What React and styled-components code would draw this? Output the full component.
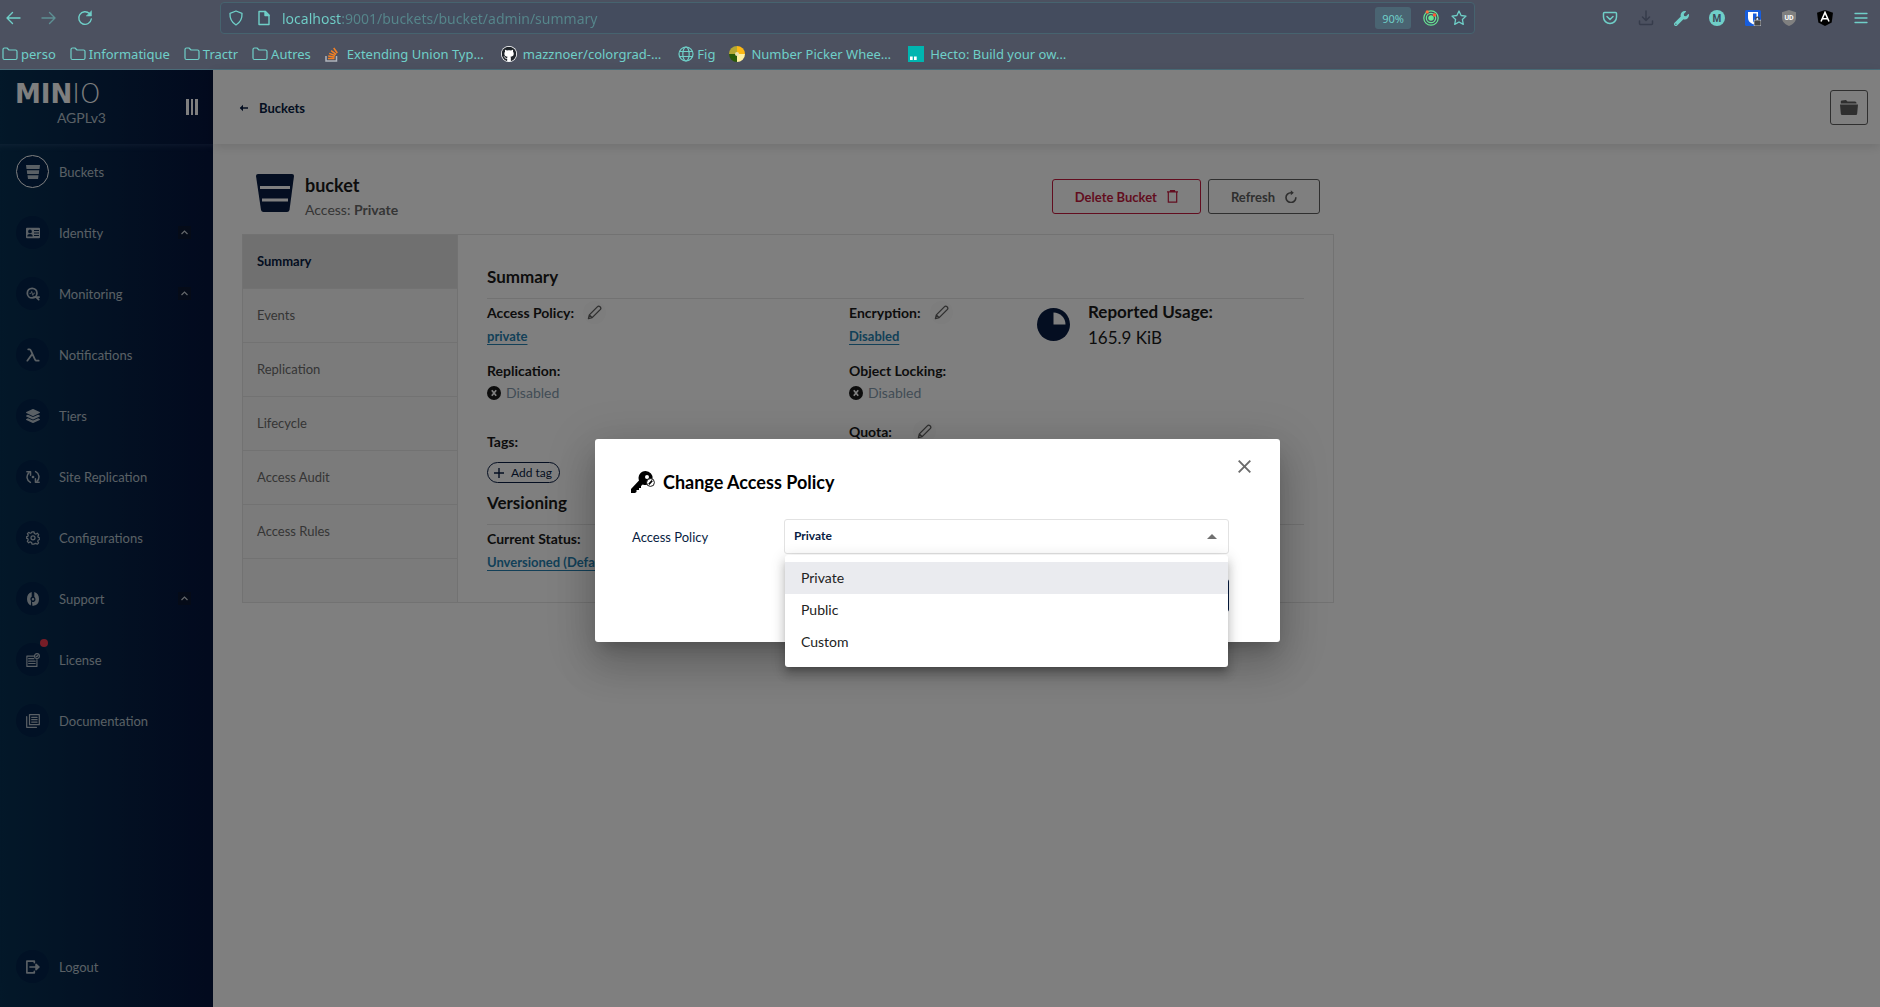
import React from 'react';
import styled, { createGlobalStyle } from 'styled-components';
import { FaGithub, FaWrench, FaLayerGroup } from 'react-icons/fa';

const teal = '#6fcfc8';
const navy = '#081c42';

const GlobalStyle = createGlobalStyle`
  *, *::before, *::after { box-sizing: border-box; }
  body { margin: 0; font-family: Lato, "Open Sans", sans-serif; }
  button, input, select { font: inherit; }
  button { padding: 0; background: none; border: 0; color: inherit; cursor: pointer; }
  svg { display: block; flex: none; }
  h1, h2, h3, p, ul, dl, dd, dt { margin: 0; padding: 0; }
  ul { list-style: none; }
`;

const Window = styled.div`
  display: flex;
  flex-direction: column;
  min-height: 100vh;
`;

/* ---------- browser chrome ---------- */

const Chrome = styled.header`
  background: #4c5160;
  border-bottom: 1px solid #4a6b78;
  color: ${teal};
  font-family: "Noto Sans", sans-serif;
`;

const Toolbar = styled.div`
  display: flex;
  align-items: center;
  height: 36px;
  padding-right: 11px;
`;

const NavButtons = styled.div`
  display: flex;
  gap: 20px;
  width: 220px;
  padding-left: 5px;
`;

const ToolButton = styled.button`
  opacity: ${(p) => (p.$dim ? 0.5 : 1)};
  color: ${(p) => p.$color || teal};
`;

const UrlBar = styled.div`
  flex: 1;
  display: flex;
  align-items: center;
  height: 32px;
  padding: 0 7px;
  background: #444c5e;
  border: 1px solid #46636f;
  border-radius: 4px;
`;

const UrlIcons = styled.div`
  display: flex;
  gap: 12px;
`;

const UrlInput = styled.input`
  flex: 1;
  min-width: 0;
  height: 28px;
  margin-left: 10px;
  padding: 0;
  border: 0;
  outline: 0;
  font-size: 14px;
  color: transparent;
  background: linear-gradient(90deg, ${teal} 60px, #55868b 60px);
  background-clip: text;
  -webkit-background-clip: text;
`;

const UrlTools = styled.div`
  display: flex;
  align-items: center;
  gap: 12px;
`;

const ZoomBadge = styled.button`
  width: 36px;
  height: 22px;
  background: #4a6472;
  border-radius: 3px;
  font-size: 11px;
`;

const Extensions = styled.div`
  display: flex;
  justify-content: flex-end;
  gap: 20px;
  width: 394px;
`;

const Bookmarks = styled.nav`
  display: flex;
  align-items: center;
  gap: 14px;
  height: 33px;
  padding: 2px 0 0 2px;
`;

const Bookmark = styled.a`
  display: flex;
  align-items: center;
  gap: ${(p) => (p.$site ? 6 : 3)}px;
  padding-right: ${(p) => (p.$site ? 3 : 0)}px;
  color: inherit;
  font-size: 13px;
  line-height: 20px;
  text-decoration: none;
  white-space: nowrap;
`;

/* ---------- console shell ---------- */

const Console = styled.div`
  position: relative;
  flex: 1;
  display: grid;
  grid-template-columns: 213px 1fr;
`;

const Sidebar = styled.aside`
  display: flex;
  flex-direction: column;
  padding-bottom: 24px;
  background: linear-gradient(90deg, #073052 0%, #05143c 100%);
  color: #b4c0ca;
`;

const SideHeader = styled.div`
  display: flex;
  justify-content: space-between;
  height: 74px;
  padding: 10px 15px 0 15px;
`;

const Brand = styled.div`
  display: flex;
  flex-direction: column;
  width: 91px;
`;

const Logo = styled.div`
  color: #fff;
  font-family: "DejaVu Sans", sans-serif;
  font-size: 26px;
  line-height: 28px;
  font-weight: 200;
  b { font-weight: 700; }
`;

const License = styled.div`
  align-self: flex-end;
  font-size: 14px;
  line-height: 20px;
`;

const Collapse = styled.button`
  height: 54px;
`;

const SideNav = styled.nav`
  flex: 1;
  display: flex;
  flex-direction: column;
  gap: 28px;
  padding: 11px 22px 0 16px;
  box-shadow: inset 0 6px 6px -5px rgba(120, 150, 190, 0.25);
`;

const SideItem = styled.a`
  display: flex;
  align-items: center;
  gap: 10px;
  height: 33px;
  margin-top: ${(p) => (p.$last ? 'auto' : 0)};
  color: inherit;
  font-size: 13px;
  text-decoration: none;
`;

const SideLabel = styled.span`
  flex: 1;
`;

const Round = styled.span`
  position: relative;
  display: grid;
  place-items: center;
  width: 33px;
  height: 33px;
  border: 1px solid ${(p) => (p.$active ? '#fff' : 'transparent')};
  border-radius: 50%;
  background: #03224a;
`;

const Alert = styled.i`
  position: absolute;
  top: -5px;
  right: 0;
  width: 8px;
  height: 8px;
  border-radius: 50%;
  background: #ee3a4e;
`;

const Caret = styled.span`
  display: grid;
  place-items: center;
  width: 13px;
  height: 13px;
  background: #0a1730;
`;

const Main = styled.main`
  background: #fff;
`;

const PageHeader = styled.div`
  display: flex;
  align-items: center;
  justify-content: space-between;
  height: 74px;
  padding: 1px 12px 0 26px;
  box-shadow: 0 3px 10px rgba(0, 0, 0, 0.12);
`;

const Crumb = styled.a`
  display: flex;
  align-items: center;
  gap: 11px;
  color: ${navy};
  font-size: 13px;
  font-weight: 700;
  text-decoration: none;
`;

const OutlineButton = styled.button`
  display: flex;
  align-items: center;
  justify-content: center;
  gap: 10px;
  height: 35px;
  padding: 0 ${(p) => (p.$icon ? 9 : 22)}px;
  border: 1px solid ${(p) => p.$color || '#5e5e5e'};
  border-radius: 3px;
  color: ${(p) => p.$color || '#5e5e5e'};
  font-size: 13px;
  font-weight: 700;
`;

const Page = styled.div`
  max-width: 1121px;
  padding-left: 29px;
`;

const TitleRow = styled.div`
  display: flex;
  align-items: center;
  gap: 11px;
  height: 90px;
  padding: 15px 14px 0;
`;

const BucketMark = styled.svg`
  margin-bottom: 7px;
`;

const TitleText = styled.div`
  flex: 1;
`;

const Title = styled.h1`
  font-size: 18px;
  line-height: 26px;
  color: #1a1a1a;
`;

const Access = styled.p`
  font-size: 14px;
  line-height: 24px;
  color: #6b6b6b;
`;

const Actions = styled.div`
  display: flex;
  gap: 7px;
`;

const Panel = styled.div`
  display: grid;
  grid-template-columns: 215px 1fr;
  border: 1px solid #e5e5e5;
`;

const Tabs = styled.nav`
  background: #f7f7f7;
  border-right: 1px solid #e5e5e5;
`;

const Tab = styled.a`
  display: flex;
  align-items: center;
  height: 54px;
  padding: 0 0 2px 14px;
  border-bottom: 1px solid #e5e5e5;
  background: ${(p) => (p.$active ? '#e0e0e0' : 'transparent')};
  color: ${(p) => (p.$active ? navy : '#6b6b6b')};
  font-size: 13px;
  font-weight: ${(p) => (p.$active ? 700 : 400)};
  text-decoration: none;
`;

const Content = styled.section`
  padding: 22px 29px 30px;
  color: #1a1a1a;
`;

const SectionTitle = styled.h2`
  padding-bottom: 2px;
  border-bottom: 1px solid #e5e5e5;
  font-size: 17px;
  line-height: 39px;
`;

const Columns = styled.div`
  display: grid;
  grid-template-columns: 362fr 188fr 267fr;
`;

const Stack = styled.div`
  display: flex;
  flex-direction: column;
  gap: 11px;
`;

const Field = styled.div`
  margin-top: ${(p) => p.$space || 0}px;
`;

const FieldLabel = styled.h3`
  display: flex;
  align-items: center;
  gap: ${(p) => (p.$wide ? 21 : 9)}px;
  height: 27px;
  font-size: 14px;
`;

const EditButton = styled.button`
  display: grid;
  place-items: center;
  width: 23px;
  height: 23px;
  border-radius: 50%;
  background: #fafafa;
  color: #5e5e5e;
`;

const ValueLink = styled.a`
  display: block;
  color: #2781b0;
  font-size: 13px;
  font-weight: 700;
  line-height: 20px;
  text-decoration: underline;
  text-underline-offset: 3px;
`;

const Status = styled.p`
  display: flex;
  align-items: center;
  gap: 5px;
  color: #8399ab;
  font-size: 14px;
  line-height: 18px;
`;

const TagButton = styled.button`
  display: flex;
  align-items: center;
  gap: 7px;
  height: 21px;
  margin-top: 7px;
  padding: 0 7px 0 6px;
  border: 1px solid ${navy};
  border-radius: 11px;
  color: ${navy};
  font-size: 12px;
`;

const Usage = styled.div`
  display: flex;
  gap: 18px;
  font-size: 17px;
  line-height: 26px;
`;

const UsageMark = styled.svg`
  margin-top: 9px;
`;

/* ---------- dialog ---------- */

const Backdrop = styled.div`
  position: absolute;
  inset: 0;
  display: grid;
  place-items: center;
  padding: 4px 5px 0 0;
  background: rgba(0, 0, 0, 0.5);
`;

const Dialog = styled.div`
  width: 100%;
  max-width: 685px;
  padding-bottom: 30px;
  background: #fff;
  border-radius: 3px;
  box-shadow: 0 11px 15px -7px rgba(0, 0, 0, 0.2), 0 24px 38px 3px rgba(0, 0, 0, 0.14), 0 9px 46px 8px rgba(0, 0, 0, 0.12);
`;

const DialogHeader = styled.div`
  display: flex;
  align-items: flex-start;
  justify-content: space-between;
  padding: 11px 20px 0 36px;
`;

const DialogTitle = styled.h2`
  display: flex;
  align-items: center;
  gap: 8px;
  padding-top: 20px;
  font-size: 18px;
  line-height: 24px;
`;

const Close = styled.button`
  display: grid;
  place-items: center;
  width: 32px;
  height: 32px;
  color: #6b6b6b;
`;

const FormRow = styled.div`
  display: grid;
  grid-template-columns: 152px 1fr;
  align-items: center;
  padding: 25px 51px 0 37px;
`;

const Label = styled.label`
  color: ${navy};
  font-size: 13px;
`;

const SelectBox = styled.div`
  position: relative;
`;

const Select = styled.select`
  display: block;
  width: 100%;
  height: 35px;
  padding: 0 9px 2px;
  border: 1px solid #e2e2e2;
  border-radius: 3px;
  background: #fff;
  color: ${navy};
  font-size: 12px;
  font-weight: 700;
  appearance: none;
`;

const Arrow = styled.i`
  position: absolute;
  top: 10px;
  right: 12px;
  border: 5px solid transparent;
  border-bottom-color: #707070;
`;

const Menu = styled.ul`
  position: absolute;
  top: 36px;
  left: 1px;
  right: 1px;
  z-index: 1;
  padding: 7px 0 9px;
  background: #fff;
  border-radius: 3px;
  box-shadow: 0 5px 5px -3px rgba(0, 0, 0, 0.2), 0 8px 10px 1px rgba(0, 0, 0, 0.14), 0 3px 14px 2px rgba(0, 0, 0, 0.12);
`;

const Option = styled.li`
  padding: 0 16px;
  background: ${(p) => (p.$active ? '#eaebef' : 'transparent')};
  color: #222;
  font-size: 14px;
  line-height: 32px;
`;

const DialogActions = styled.div`
  display: flex;
  justify-content: flex-end;
  padding: 25px 51px 0 36px;
`;

const PrimaryButton = styled.button`
  width: 64px;
  height: 33px;
  border-radius: 3px;
  background: ${navy};
`;

/* ---------- icons ---------- */

const Line = ({ children, size = 16, w = 1.4 }) => (
  <svg width={size} height={size} viewBox="0 0 16 16" fill="none" stroke="currentColor" strokeWidth={w} strokeLinecap="round" strokeLinejoin="round" aria-hidden="true">
    {children}
  </svg>
);
const Solid = ({ children, size = 14 }) => (
  <svg width={size} height={size} viewBox="0 0 14 14" fill="currentColor" aria-hidden="true">{children}</svg>
);

const BackIcon = () => <Line><path d="M15 8H2M7.500 2.500L2 8l5.500 5.500" /></Line>;
const ForwardIcon = () => <Line><path d="M1 8h13M8.500 2.500L14 8l-5.500 5.500" /></Line>;
const ReloadIcon = () => <Line><path d="M14.300 9A6.300 6.300 0 1 1 12.500 3.600" /><path d="M14.500 1v5h-5z" fill="currentColor" strokeWidth="0.500" /></Line>;
const ShieldIcon = () => <Line w={1.3}><path d="M8 1l6 2.300c.3 5-1.500 9-6 11.700-4.500-2.700-6.300-6.700-6-11.700z" /></Line>;
const PageIcon = () => <Line><path d="M3 1.500h6.500L13 5v9.500H3z" /><path d="M9 1.500V5.500h4" fill="currentColor" /></Line>;
const FolderLine = () => <Line w={1.2}><path d="M1 3.500q0-1.500 1.500-1.500H5l2 2h6.500q1.500 0 1.500 1.500v6.500q0 1.500-1.500 1.500h-11Q1 13.500 1 12z" /></Line>;
const GlobeIcon = () => <Line w={1.2}><circle cx="8" cy="8" r="7" /><ellipse cx="8" cy="8" rx="3.200" ry="7" /><path d="M1.500 5.500h13M1.500 10.500h13" /></Line>;
const StarIcon = () => <Line w={1.3}><path d="M8 1l2.100 4.500 4.900.6-3.600 3.400.9 4.900L8 12l-4.300 2.400.9-4.900L1 6.100l4.900-.6z" /></Line>;
const OrbitIcon = () => (
  <svg width="16" height="16" viewBox="0 0 16 16" fill="none" stroke="#68e594" strokeWidth="1.200" aria-hidden="true">
    <circle cx="8" cy="8" r="7.200" /><circle cx="8" cy="8" r="4.700" /><circle cx="8" cy="8" r="2.200" fill="#68e594" />
    <circle cx="4.200" cy="1.900" r="1.600" fill="#ff7139" stroke="none" /><circle cx="11.500" cy="5" r="1.700" fill="#ff5a36" stroke="none" />
  </svg>
);
const PocketIcon = () => <Line w={1.5}><path d="M2.500 2.500h11q1 0 1 1V7a6.500 6.500 0 0 1-13 0V3.500q0-1 1-1zM5 6.500l3 3 3-3" /></Line>;
const DownloadIcon = () => <Line w={1.5}><path d="M8 1v9M4.500 7L8 10.500 11.500 7M1.500 11v2.500q0 1 1 1h11q1 0 1-1V11" /></Line>;
const MIcon = () => (
  <svg width="16" height="16" viewBox="0 0 16 16" aria-hidden="true">
    <circle cx="8" cy="8" r="8" fill={teal} />
    <text x="8" y="11.500" textAnchor="middle" fontFamily="Roboto" fontWeight="700" fontSize="10" fill="#3c4a58">M</text>
  </svg>
);
const VaultIcon = () => (
  <svg width="16" height="16" viewBox="0 0 16 16" aria-hidden="true">
    <rect width="16" height="16" rx="1.500" fill="#175ddc" />
    <path d="M3 2h10v6c0 3-2 4.800-5 6.200C5 12.800 3 11 3 8z" fill="#fff" /><path d="M8 3.500h3.500V8c0 2-1.300 3.300-3.500 4.500z" fill="#175ddc" />
    <rect x="9" y="10" width="7" height="6" rx="1" fill="#444" stroke="#fff" strokeWidth="0.600" /><path d="M10.800 10V8.800a1.700 1.700 0 0 1 3.400 0V10" fill="none" stroke="#444" strokeWidth="1.200" />
  </svg>
);
const BlockIcon = () => (
  <svg width="16" height="16" viewBox="0 0 16 16" aria-hidden="true">
    <path d="M8 0l7 2.200v5.300c0 4-2.500 6.500-7 8.500-4.500-2-7-4.500-7-8.500V2.200z" fill="#808080" />
    <text x="8" y="9.500" textAnchor="middle" fontFamily="Roboto" fontWeight="700" fontSize="7" fill="#fff">UD</text>
  </svg>
);
const AngularIcon = () => (
  <svg width="16" height="16" viewBox="0 0 16 16" aria-hidden="true">
    <path d="M8 0l8 2.800-1.300 9.700L8 16l-6.700-3.500L0 2.800z" fill="#000" />
    <path d="M4 11.500L8 2.500l4 9M5.700 8.800h4.600" fill="none" stroke="#fff" strokeWidth="1.600" />
  </svg>
);
const HamburgerIcon = () => <Line w={1.3}><path d="M2 3.500h12M2 8h12M2 12.500h12" /></Line>;
const StackIcon = () => (
  <svg width="16" height="16" viewBox="0 0 16 16" fill="none" strokeWidth="1.500" aria-hidden="true">
    <path d="M1 10v5h10.500v-5" stroke="#b0b4bb" />
    <path d="M3 12.600h6.500M3.200 10.100l6.400.9M4.200 7.400l6 2.100M6.100 4.600l5 3.800M8.700 2l3.600 5" stroke="#f48024" />
  </svg>
);
const WheelIcon = () => (
  <svg width="16" height="16" viewBox="0 0 16 16" aria-hidden="true">
    <path d="M8 8V0a8 8 0 0 1 8 8z" fill="#fdb813" /><path d="M8 8h8a8 8 0 0 1-8 8z" fill="#fff0a0" />
    <path d="M8 8v8a8 8 0 0 1-8-8z" fill="#2a5a08" /><path d="M8 8H0a8 8 0 0 1 8-8z" fill="#b5a832" /><circle cx="8" cy="8" r="2" fill="#e8e0b0" />
  </svg>
);
const HectoIcon = () => (
  <svg width="16" height="16" viewBox="0 0 16 16" aria-hidden="true">
    <rect width="16" height="16" fill="#00b5b0" /><path d="M2 10.500h2.700V14H2zM6 10.500h2.700V14H6z" fill="#fff" />
  </svg>
);
const GithubIcon = () => (
  <svg width="16" height="16" viewBox="0 0 16 16" aria-hidden="true">
    <circle cx="8" cy="8" r="8" fill="#fff" /><g transform="translate(0.500 0.500)"><FaGithub size={15} color="#20252b" /></g>
  </svg>
);
const CollapseIcon = () => (
  <svg width="12" height="16" viewBox="0 0 12 16" fill="#fff" aria-hidden="true"><path d="M0 0h3v16H0zM5 0h2v16H5zM9 0h3v16H9z" /></svg>
);
const CaretIcon = () => <svg width="7" height="5" viewBox="0 0 7 5" fill="none" stroke="#c8ced6" strokeWidth="1.200" aria-hidden="true"><path d="M.5 4L3.500 1l3 3" /></svg>;

const BucketIcon = () => <Solid><path d="M0 0h14l-.5 4H.5zM.8 5.200h12.400L12.800 9H1.200zM1.500 10.200h11L12 14H2z" /></Solid>;
const IdentityIcon = () => <Solid><path fillRule="evenodd" d="M1 1.800h12q1 0 1 1v8.400q0 1-1 1H1q-1 0-1-1V2.800q0-1 1-1zM4 3.500A1.900 1.900 0 1 0 4 7.300 1.900 1.900 0 0 0 4 3.500zM1.300 10.500h5.400q0-2.400-2.700-2.400T1.300 10.500zM8 4v1h5V4zM8 6.500v1h5v-1zM8 9v1h5V9z" /></Solid>;
const MonitoringIcon = () => (
  <Line size={14} w={2}><circle cx="7" cy="7" r="5.500" /><path d="M11 11l3.500 3.500M8.500 11.500H15" /><path d="M4.500 7.500h1L6.500 5l1.300 4.500L9 7h1" strokeWidth="1" /></Line>
);
const LambdaIcon = () => <Line size={14} w={2}><path d="M2.500 1.500H4q1 0 1.600 1.500l4.600 10q.6 1.500 1.800 1.500h2.500M7 7L1.500 14.500" /></Line>;
const ReplicationIcon = () => <Line size={14} w={1.7}><path d="M5 14.200A6.800 6.800 0 0 1 3.500 3M11 1.800A6.800 6.800 0 0 1 12.500 13" /><path d="M1 2h4.200v4M15 14h-4.200v-4" /><circle cx="8" cy="8" r="0.700" fill="currentColor" /></Line>;
const GearIcon = () => (
  <Line size={14} w={1.4}><path d="M6.800 1h2.400l.4 1.900 1.600.7 1.700-1.100 1.600 1.700-1 1.600.6 1.600 1.700.4v1.900l-1.800.6-.6 1.500 1 1.700-1.600 1.600-1.700-1-1.500.6L9.200 15H6.800l-.4-1.900-1.600-.7-1.700 1.100-1.600-1.700 1-1.600L2 8.700.3 8.200V6.800L2 6.200l.6-1.500-1-1.700 1.500-1.400 1.700 1 1.500-.6z" /><circle cx="8" cy="7.800" r="2.300" /></Line>
);
const SupportIcon = () => <Solid><path fillRule="evenodd" d="M5.700 0v4.700A2.700 2.700 0 0 0 5.200 9L4.800 13.500C2.500 12.500 1 10 1 7 1 3.500 2.500.8 5.700 0zM8.300 0C11.500.8 13 3.500 13 7q0 4.500-3 6l-3.500 1-.5-4q3.500.3 3.500-2.800 0-1.500-1.200-2.500zM7 6a1 1 0 1 0 0 2.500A1 1 0 0 0 7 6z" /></Solid>;
const LicenseIcon = () => <Line size={14} w={1.3}><path d="M10 3.500H1v11.800h11.500V7.500M3 6.500h6M3 9.300h7.500M3 12h7.500" /><circle cx="12.500" cy="3.500" r="2.800" /><path d="M11.500 3.500l.8.8 1.300-1.500" /></Line>;
const DocsIcon = () => <Line size={14} w={1.4}><path d="M4 .8h11.200v11.400H4zM.8 3v12.200H12M6.500 3.800h6.200M6.500 6.500h6.200M6.500 9.200h6.200" /></Line>;
const LogoutIcon = () => <Line size={14} w={1.9}><path d="M9.500 3V1.200H1v13.600h8.500V13M4.500 8H14M11.500 5L14.800 8l-3.300 3z" /></Line>;

const PencilIcon = () => <Line size={15} w={1.4}><path d="M1.500 14.500l1-4L11 2q1-1 2.200-.6 1.600.6 1.600 2 0 .8-.7 1.500L5.500 13.500zM2.500 10.500l3 3" /></Line>;
const CrossIcon = () => (
  <svg width="14" height="14" viewBox="0 0 14 14" aria-hidden="true"><circle cx="7" cy="7" r="7" fill="#1a1a1a" /><path d="M4.800 4.200l4.400 5.600M9.200 4.200L4.800 9.800" stroke="#fff" strokeWidth="1.700" /></svg>
);
const TrashIcon = () => <svg width="11" height="13" viewBox="0 0 11 13" fill="none" stroke="currentColor" strokeWidth="1.200" aria-hidden="true"><path d="M0 1.800h11M3.500 1.500V.6h4v.9M1.300 2v10.200h8.400V2" /></svg>;
const RefreshIcon = () => <svg width="12" height="13" viewBox="0 0 12 13" fill="none" stroke="currentColor" strokeWidth="1.600" aria-hidden="true"><path d="M10.800 7.300A4.900 4.900 0 1 1 6 2.700h1.500" /><path d="M5.800.2v5l3-2.500z" fill="currentColor" stroke="none" /></svg>;
const ArrowLeftIcon = () => <svg width="9" height="8" viewBox="0 0 9 8" fill="none" stroke="currentColor" strokeWidth="1.500" aria-hidden="true"><path d="M9 4H1.500" /><path d="M4 .8L.8 4 4 7.200z" fill="currentColor" stroke="none" /></svg>;
const FolderIcon = () => <svg width="18" height="15" viewBox="0 0 18 15" fill="currentColor" aria-hidden="true"><path d="M.8 3.500V1.500Q.8.500 2 .5L6 0l1.500 1.500H15q1.500 0 1.500 1.500v.5z" /><path d="M0 4.500h18l-.8 9q0 1.500-1.500 1.500H2.300Q.8 15 .8 13.500z" /></svg>;
const KeyIcon = () => (
  <svg width="24" height="22" viewBox="0 0 24 22" aria-hidden="true">
    <path fillRule="evenodd" d="M14.500 0a7 7 0 1 1-2.800 13.400l-1.700 1.500v2H8v2H5.500v2L4 22H0v-4l8-8.500A7 7 0 0 1 14.500 0zM16 4a2 2 0 1 0 0 4 2 2 0 0 0 0-4z" />
    <circle cx="19.500" cy="11.500" r="3.900" fill="#fff" stroke="#000" strokeWidth="0.900" /><path d="M17.800 13.300l3.400-3.600" stroke="#000" strokeWidth="1.700" />
  </svg>
);

/* ---------- data ---------- */

const bookmarks = [
  { label: 'perso', icon: <FolderLine /> },
  { label: 'Informatique', icon: <FolderLine /> },
  { label: 'Tractr', icon: <FolderLine /> },
  { label: 'Autres', icon: <FolderLine /> },
  { label: 'Extending Union Typ…', icon: <StackIcon />, site: true },
  { label: 'mazznoer/colorgrad-…', icon: <GithubIcon />, site: true },
  { label: 'Fig', icon: <GlobeIcon /> },
  { label: 'Number Picker Whee…', icon: <WheelIcon />, site: true },
  { label: 'Hecto: Build your ow…', icon: <HectoIcon />, site: true },
];

const extensions = [
  { label: 'Pocket', icon: <PocketIcon /> },
  { label: 'Downloads', icon: <DownloadIcon />, color: '#363c4b' },
  { label: 'Developer tools', icon: <FaWrench size={15} /> },
  { label: 'Account', icon: <MIcon /> },
  { label: 'Passwords', icon: <VaultIcon /> },
  { label: 'Blocker', icon: <BlockIcon /> },
  { label: 'Angular', icon: <AngularIcon /> },
  { label: 'Application menu', icon: <HamburgerIcon /> },
];

const navItems = [
  { label: 'Buckets', icon: <BucketIcon />, active: true },
  { label: 'Identity', icon: <IdentityIcon />, group: true },
  { label: 'Monitoring', icon: <MonitoringIcon />, group: true },
  { label: 'Notifications', icon: <LambdaIcon /> },
  { label: 'Tiers', icon: <FaLayerGroup size={14} /> },
  { label: 'Site Replication', icon: <ReplicationIcon /> },
  { label: 'Configurations', icon: <GearIcon /> },
  { label: 'Support', icon: <SupportIcon />, group: true },
  { label: 'License', icon: <LicenseIcon />, alert: true },
  { label: 'Documentation', icon: <DocsIcon /> },
  { label: 'Logout', icon: <LogoutIcon />, last: true },
];

const tabs = ['Summary', 'Events', 'Replication', 'Lifecycle', 'Access Audit', 'Access Rules'];
const policies = ['Private', 'Public', 'Custom'];

const Disabled = () => <Status><CrossIcon />Disabled</Status>;

export default function App() {
  return (
    <Window>
      <GlobalStyle />
      <Chrome>
        <Toolbar>
          <NavButtons>
            <ToolButton aria-label="Back"><BackIcon /></ToolButton>
            <ToolButton aria-label="Forward" $dim><ForwardIcon /></ToolButton>
            <ToolButton aria-label="Reload"><ReloadIcon /></ToolButton>
          </NavButtons>
          <UrlBar>
            <UrlIcons><ShieldIcon /><PageIcon /></UrlIcons>
            <UrlInput aria-label="Address" defaultValue="localhost:9001/buckets/bucket/admin/summary" />
            <UrlTools>
              <ZoomBadge>90%</ZoomBadge>
              <OrbitIcon />
              <ToolButton aria-label="Bookmark this page"><StarIcon /></ToolButton>
            </UrlTools>
          </UrlBar>
          <Extensions>
            {extensions.map((e) => (
              <ToolButton key={e.label} aria-label={e.label} $color={e.color}>{e.icon}</ToolButton>
            ))}
          </Extensions>
        </Toolbar>
        <Bookmarks>
          {bookmarks.map((b) => (
            <Bookmark key={b.label} href="#" $site={b.site}>{b.icon}{b.label}</Bookmark>
          ))}
        </Bookmarks>
      </Chrome>

      <Console>
        <Sidebar>
          <SideHeader>
            <Brand>
              <Logo><b>MIN</b>IO</Logo>
              <License>AGPLv3</License>
            </Brand>
            <Collapse aria-label="Collapse menu"><CollapseIcon /></Collapse>
          </SideHeader>
          <SideNav>
            {navItems.map((n) => (
              <SideItem key={n.label} href="#" $last={n.last}>
                <Round $active={n.active}>{n.icon}{n.alert && <Alert />}</Round>
                <SideLabel>{n.label}</SideLabel>
                {n.group && <Caret><CaretIcon /></Caret>}
              </SideItem>
            ))}
          </SideNav>
        </Sidebar>

        <Main>
          <PageHeader>
            <Crumb href="#"><ArrowLeftIcon />Buckets</Crumb>
            <OutlineButton $icon aria-label="Browse bucket"><FolderIcon /></OutlineButton>
          </PageHeader>
          <Page>
            <TitleRow>
              <BucketMark width="38" height="38" viewBox="0 0 38 38" aria-hidden="true">
                <path d="M2 0h34q2 0 2 2l-4.500 34q-.5 2-2.500 2H7.500q-2 0-2.500-2L0 2Q0 0 2 0z" fill={navy} />
                <path d="M4 12h30v3H4zM6 24.500h26v3H6z" fill="#fff" />
              </BucketMark>
              <TitleText>
                <Title>bucket</Title>
                <Access>Access: <b>Private</b></Access>
              </TitleText>
              <Actions>
                <OutlineButton $color="#c51b3f">Delete Bucket <TrashIcon /></OutlineButton>
                <OutlineButton>Refresh <RefreshIcon /></OutlineButton>
              </Actions>
            </TitleRow>
            <Panel>
              <Tabs>
                {tabs.map((t, i) => <Tab key={t} href="#" $active={i === 0}>{t}</Tab>)}
              </Tabs>
              <Content>
                <SectionTitle>Summary</SectionTitle>
                <Columns>
                  <Stack>
                    <Field>
                      <FieldLabel>Access Policy: <EditButton aria-label="Edit access policy"><PencilIcon /></EditButton></FieldLabel>
                      <ValueLink href="#">private</ValueLink>
                    </Field>
                    <Field>
                      <FieldLabel>Replication:</FieldLabel>
                      <Disabled />
                    </Field>
                    <Field $space={15}>
                      <FieldLabel>Tags:</FieldLabel>
                      <TagButton>
                        <svg width="10" height="10" viewBox="0 0 10 10" stroke="currentColor" strokeWidth="1.400" aria-hidden="true"><path d="M5 0v10M0 5h10" /></svg>
                        Add tag
                      </TagButton>
                    </Field>
                  </Stack>
                  <Stack>
                    <Field>
                      <FieldLabel>Encryption: <EditButton aria-label="Edit encryption"><PencilIcon /></EditButton></FieldLabel>
                      <ValueLink href="#">Disabled</ValueLink>
                    </Field>
                    <Field>
                      <FieldLabel>Object Locking:</FieldLabel>
                      <Disabled />
                    </Field>
                    <Field $space={5}>
                      <FieldLabel $wide>Quota: <EditButton aria-label="Edit quota"><PencilIcon /></EditButton></FieldLabel>
                    </Field>
                  </Stack>
                  <Usage>
                    <UsageMark width="33" height="33" viewBox="0 0 33 33" aria-hidden="true">
                      <circle cx="16.500" cy="16.500" r="16.500" fill={navy} />
                      <path d="M16.500 4.500a12 12 0 0 1 12 12h-12z" fill="#fff" />
                    </UsageMark>
                    <div>
                      <b>Reported Usage:</b>
                      <p>165.9 KiB</p>
                    </div>
                  </Usage>
                </Columns>
                <SectionTitle>Versioning</SectionTitle>
                <Field>
                  <FieldLabel>Current Status:</FieldLabel>
                  <ValueLink href="#">Unversioned (Default)</ValueLink>
                </Field>
              </Content>
            </Panel>
          </Page>
        </Main>

        <Backdrop>
          <Dialog role="dialog" aria-labelledby="dialog-title">
            <DialogHeader>
              <DialogTitle id="dialog-title"><KeyIcon />Change Access Policy</DialogTitle>
              <Close aria-label="Close">
                <svg width="13" height="13" viewBox="0 0 13 13" stroke="currentColor" strokeWidth="1.900" aria-hidden="true"><path d="M.7.7l11.600 11.600M12.300.7L.7 12.300" /></svg>
              </Close>
            </DialogHeader>
            <FormRow>
              <Label htmlFor="policy">Access Policy</Label>
              <SelectBox>
                <Select id="policy" defaultValue="Private">
                  {policies.map((p) => <option key={p}>{p}</option>)}
                </Select>
                <Arrow />
                <Menu role="listbox" aria-label="Access Policy">
                  {policies.map((p, i) => (
                    <Option key={p} role="option" aria-selected={i === 0} $active={i === 0}>{p}</Option>
                  ))}
                </Menu>
              </SelectBox>
            </FormRow>
            <DialogActions><PrimaryButton aria-label="Set" /></DialogActions>
          </Dialog>
        </Backdrop>
      </Console>
    </Window>
  );
}
